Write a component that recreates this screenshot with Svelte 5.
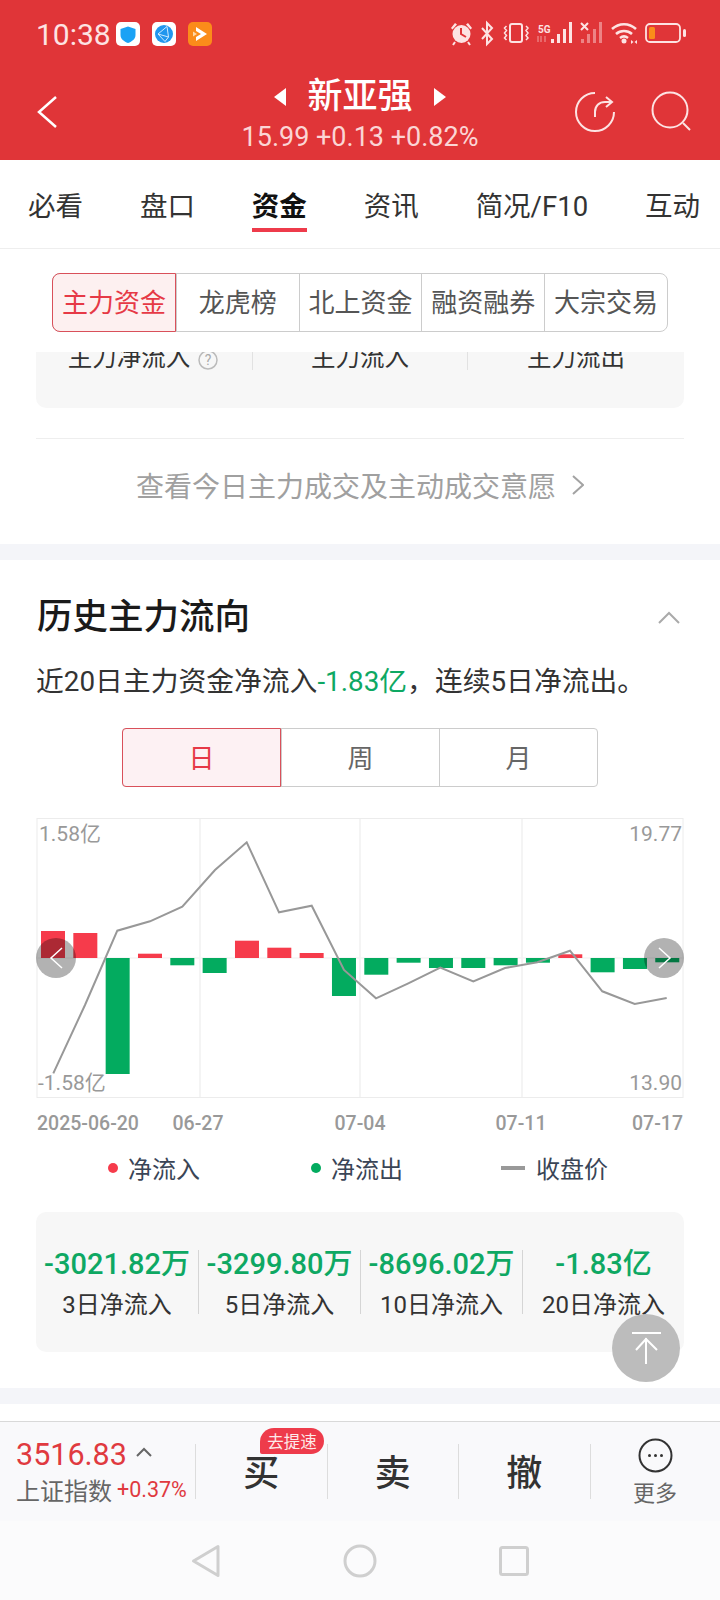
<script>
  const tabs = ['必看', '盘口', '资金', '资讯', '简况/F10', '互动'];
  const segments = ['主力资金', '龙虎榜', '北上资金', '融资融券', '大宗交易'];
  const periods = ['日', '周', '月'];
  const stats = [
    { value: '-3021.82万', label: '3日净流入' },
    { value: '-3299.80万', label: '5日净流入' },
    { value: '-8696.02万', label: '10日净流入' },
    { value: '-1.83亿', label: '20日净流入' }
  ];

  // net flow per day, px above (+) or below (-) the zero line
  const flows = [27, 25, -116, 4.3, -7.3, -15, 17.3, 10.3, 5, -38, -16.7, -4.7, -10, -10, -7.3, -4.7, 3.7, -14.3, -11, -4.3];
  const zero = 958;
  const bars = flows.map((v, i) => ({
    x: 41 + i * 32.33,
    y: v > 0 ? zero - v : zero,
    h: Math.abs(v),
    color: v > 0 ? '#f63b4b' : '#03ab5f'
  }));
  const price = '53.3,1073.3 85,1005 117.3,930.7 150,921.3 182.3,906.7 215,870 246.7,842.3 279,912.3 311.7,905.7 344,970 376,998.3 408.3,983.3 440.3,967.7 473.3,981.3 505,968 537.3,962.3 570,950.7 602.3,991.3 634.7,1004 666.7,998';
</script>

<div class="page">
  <header class="header">
    <div class="status">
      <div class="status-left">
        <span class="time">10:38</span>
        <svg class="app" viewBox="0 0 24 24"><rect width="24" height="24" rx="5" fill="#fff" /><path d="M12 4.500l7.500 2.500v6c0 4-3.500 6.500-7.500 8-4-1.500-7.500-4-7.500-8V7z" fill="#1aa2f5" /></svg>
        <svg class="app" viewBox="0 0 24 24"><rect width="24" height="24" rx="5" fill="#fff" /><circle cx="12" cy="12" r="9" fill="#2196ee" /><path d="M15 4.500L6 12l10.500 3L15 4.500zM6 12l7 7.500 3.500-4.500" fill="none" stroke="#cfeaff" stroke-width="1" /></svg>
        <svg class="app" viewBox="0 0 24 24"><rect width="24" height="24" rx="5" fill="#fb8c1a" /><path d="M8 5l11 7-11 7v-4l5-3-5-3z" fill="#fff" /><path d="M5 9.500l4 2.500-4 2.500z" fill="#ffd9a8" /></svg>
      </div>
      <svg class="status-right" width="240" height="30" viewBox="450 20 240 30">
        <g fill="#fde3e3" stroke="none">
          <circle cx="461.500" cy="35" r="9" />
          <path d="M451 29l4-5 2 1.500-4.500 5zM472 29l-4-5-2 1.500 4.500 5z" />
          <path d="M455 43l-2 3M468 43l2 3" stroke="#fde3e3" stroke-width="2" />
          <path d="M461 29v6l5 3" fill="none" stroke="#e03538" stroke-width="2" />
          <text class="tiny" x="538" y="33.500">5G</text>
          <rect x="551" y="40" width="3" height="4" />
          <rect x="557" y="35" width="3" height="9" />
          <rect x="563" y="30" width="3" height="14" />
          <rect x="569" y="23" width="3" height="21" />
          <g opacity="0.45">
            <rect x="581" y="40" width="3" height="4" />
            <rect x="587" y="35" width="3" height="9" />
            <rect x="593" y="30" width="3" height="14" />
            <rect x="599" y="23" width="3" height="21" />
          </g>
          <circle cx="624" cy="42" r="2.500" />
        </g>
        <g fill="none" stroke="#fde3e3" stroke-width="2">
          <path d="M482 29l10 11-5 5V24l5 5-10 11" />
          <rect x="510" y="25" width="12" height="18" rx="2" />
          <path d="M506.500 27l-2 2 2 2.500-2 2.500 2 2.500-2 2.500 2 2M526 27l2 2-2 2.500 2 2.500-2 2.500 2 2.500-2 2" stroke-width="1.500" />
          <path d="M538 37v6M541 37v6M545 37v6" stroke-width="1" opacity="0.6" />
          <path d="M581 24l7 7M588 24l-7 7" />
          <path d="M612 30c7-6.500 17-6.500 24 0M616 35c4.500-4 11.500-4 16 0M620 39c2.500-2 5.500-2 8 0" stroke-width="2.500" />
          <rect x="646" y="25" width="34" height="18" rx="4" stroke-width="1.800" />
        </g>
        <rect x="649" y="28" width="6" height="12" rx="1.500" fill="#fb8c1a" />
        <rect x="683" y="30" width="3" height="8" rx="1.500" fill="#fde3e3" />
        <path d="M631 41l2.500 2-2.500 2zM637 41l-2.500 2 2.500 2z" fill="#fde3e3" />
      </svg>
    </div>
    <div class="nav">
      <svg class="nav-side" width="80" height="92" viewBox="0 68 80 92">
        <path d="M56 97L39 112l17 15" fill="none" stroke="#fff" stroke-width="2.500" />
      </svg>
      <div class="title-block">
        <div class="title-row">
          <i class="tri left"></i>
          <span class="name">新亚强</span>
          <i class="tri right"></i>
        </div>
        <div class="quote">15.99 +0.13 +0.82%</div>
      </div>
      <svg class="nav-side end" width="160" height="92" viewBox="560 68 160 92">
        <g fill="none" stroke="#fde3e3" stroke-width="2">
          <path d="M595 93a19 19 0 1 0 19 19" />
          <path d="M595 117v-5c0-6 4-10 10-10h6M606 97l6 5-6 5" />
          <circle cx="670" cy="110" r="17.500" />
          <path d="M683 123l7 7" />
        </g>
      </svg>
    </div>
  </header>

  <nav class="tabs">
    {#each tabs as tab}
      <span class="tab" class:on={tab === '资金'}>{tab}</span>
    {/each}
  </nav>

  <section class="top">
    <div class="segs">
      {#each segments as seg, i}
        <span class="seg" class:active={i === 0}>{seg}</span>
      {/each}
    </div>
    <div class="flow-card">
      <div class="flow-row">
        <span class="flow-a"><b>主力净流入</b>
          <svg width="20" height="20" viewBox="0 0 20 20"><circle cx="10" cy="10" r="9" fill="none" stroke="#bbb" stroke-width="1.500" /><text class="qm" x="10" y="15">?</text></svg>
        </span>
        <span class="flow-b"><b>主力流入</b></span>
        <span class="flow-c"><b>主力流出</b></span>
      </div>
    </div>
    <div class="more">
      <span>查看今日主力成交及主动成交意愿</span>
      <svg width="12" height="20" viewBox="0 0 12 20"><path d="M1 1l10 9-10 9" fill="none" stroke="#a3a3a3" stroke-width="2" /></svg>
    </div>
  </section>

  <section class="history">
    <div class="head">
      <h2>历史主力流向</h2>
      <svg width="22" height="13" viewBox="0 0 22 13"><path d="M1 12L11 2l10 10" fill="none" stroke="#aaa" stroke-width="2" /></svg>
    </div>
    <p class="summary">近20日主力资金净流入<em>-1.83亿</em>，连续5日净流出。</p>
    <div class="periods">
      {#each periods as p, i}
        <span class="period" class:active={i === 0}>{p}</span>
      {/each}
    </div>

    <svg class="chart" width="650" height="320" viewBox="36 815 650 320">
      <rect x="37" y="818.500" width="646" height="279" fill="#fff" stroke="#ececec" stroke-width="1" />
      <path d="M200 819v278M360 819v278M522 819v278" stroke="#f1f1f1" stroke-width="1.500" />
      <path d="M37 958h646" stroke="#f5f5f5" stroke-width="1.500" />
      {#each bars as b}
        <rect x={b.x} y={b.y} width="24" height={b.h} fill={b.color} />
      {/each}
      <polyline points={price} fill="none" stroke="#989898" stroke-width="2" />
      <text class="ax" x="39" y="841">1.58亿</text>
      <text class="ax" x="38" y="1090">-1.58亿</text>
      <text class="ax" x="682" y="841" text-anchor="end">19.77</text>
      <text class="ax" x="682" y="1090" text-anchor="end">13.90</text>
      <text class="date" x="37" y="1130">2025-06-20</text>
      <text class="date" x="198" y="1130" text-anchor="middle">06-27</text>
      <text class="date" x="360" y="1130" text-anchor="middle">07-04</text>
      <text class="date" x="521" y="1130" text-anchor="middle">07-11</text>
      <text class="date" x="683" y="1130" text-anchor="end">07-17</text>
      <circle cx="56" cy="958" r="20" fill="#000" opacity="0.3" />
      <circle cx="664" cy="958" r="20" fill="#000" opacity="0.3" />
      <path d="M62 948l-11 10 11 10M659 948l11 10-11 10" fill="none" stroke="#fff" stroke-width="1.500" />
    </svg>

    <div class="legend">
      <span class="key in"><i></i>净流入</span>
      <span class="key out"><i></i>净流出</span>
      <span class="key close"><i></i>收盘价</span>
    </div>

    <div class="stats">
      {#each stats as s}
        <div class="stat">
          <div class="val">{s.value}</div>
          <div class="lbl">{s.label}</div>
        </div>
      {/each}
    </div>
  </section>

  <div class="blank"></div>

  <footer class="bar">
    <div class="index">
      <div class="idx-top"><span class="idx-num">3516.83</span>
        <svg width="16" height="10" viewBox="0 0 16 10"><path d="M1 9l7-7 7 7" fill="none" stroke="#666" stroke-width="2" /></svg>
      </div>
      <div class="idx-bot"><span class="idx-name">上证指数</span><span class="idx-pct">+0.37%</span></div>
    </div>
    <div class="act">买<span class="badge">去提速</span></div>
    <div class="act">卖</div>
    <div class="act">撤</div>
    <div class="act more-act">
      <svg width="35" height="35" viewBox="0 0 35 35"><circle cx="17.500" cy="17.500" r="16" fill="none" stroke="#333" stroke-width="2" /><circle cx="11.500" cy="17.500" r="1.500" fill="#333" /><circle cx="17.500" cy="17.500" r="1.500" fill="#333" /><circle cx="23.500" cy="17.500" r="1.500" fill="#333" /></svg>
      <span>更多</span>
    </div>
  </footer>

  <div class="sysnav">
    <svg width="30" height="34" viewBox="0 0 30 34"><path d="M27 2.500v29L2.500 17z" fill="none" stroke="#cfcfcf" stroke-width="3" stroke-linejoin="round" /></svg>
    <svg width="34" height="34" viewBox="0 0 34 34"><circle cx="17" cy="17" r="15" fill="none" stroke="#cfcfcf" stroke-width="3" /></svg>
    <svg width="30" height="30" viewBox="0 0 30 30"><rect x="1.500" y="1.500" width="27" height="27" rx="2" fill="none" stroke="#cfcfcf" stroke-width="3" /></svg>
  </div>

  <div class="to-top">
    <svg width="68" height="68" viewBox="0 0 68 68"><path d="M20 19h29M34 24v26M24 36l10-11 11 11" fill="none" stroke="#fff" stroke-width="2" /></svg>
  </div>
</div>

<style>
  :global(body) {
    margin: 0;
    background: #fff;
  }

  .page {
    position: relative;
    width: 720px;
    height: 1600px;
    overflow: hidden;
    background: #f4f5f9;
    color: #333;
    font-family: Roboto, "Noto Sans CJK SC", sans-serif;
  }

  /* header */
  .header {
    height: 160px;
    background: #e03538;
    color: #fff;
  }

  .status {
    height: 68px;
    display: flex;
    justify-content: space-between;
    align-items: center;
    padding: 0 30px 0 36px;
  }

  .status-left {
    display: flex;
    align-items: center;
    gap: 12px;
  }

  .time {
    width: 68px;
    font-size: 30px;
    color: #fde3e3;
    white-space: nowrap;
  }

  .app {
    width: 24px;
    height: 24px;
  }

  .status-right {
    display: block;
  }

  .tiny {
    font-size: 10px;
    font-weight: 700;
  }

  .nav {
    height: 92px;
    display: grid;
    grid-template-columns: 1fr auto 1fr;
  }

  .nav-side {
    display: block;
  }

  .nav-side.end {
    justify-self: end;
  }

  .title-block {
    padding-top: 9px;
    text-align: center;
  }

  .title-row {
    height: 40px;
    display: flex;
    justify-content: center;
    align-items: center;
    gap: 21px;
  }

  .name {
    font-size: 35px;
    line-height: 40px;
    font-weight: 500;
  }

  .tri {
    width: 0;
    height: 0;
    border-top: 9px solid transparent;
    border-bottom: 9px solid transparent;
  }

  .tri.left {
    border-right: 12px solid #fff;
  }

  .tri.right {
    border-left: 12px solid #fff;
  }

  .quote {
    margin-top: 5px;
    font-size: 27px;
    line-height: 30px;
    color: #fbd5d5;
    white-space: nowrap;
  }

  /* tabs */
  .tabs {
    height: 88px;
    display: flex;
    justify-content: space-between;
    align-items: flex-start;
    padding: 0 20px 0 28px;
    background: #fff;
    border-bottom: 1px solid #eee;
  }

  .tab {
    height: 68px;
    padding-top: 26px;
    box-sizing: border-box;
    font-size: 27.500px;
    line-height: 42px;
    color: #333;
    white-space: nowrap;
  }

  .tab.on {
    font-weight: 700;
    color: #111;
    border-bottom: 4px solid #ee3b4b;
    height: 72px;
  }

  /* sub sections */
  .top {
    height: 295px;
    background: #fff;
    padding: 24px 36px 0;
    box-sizing: border-box;
  }

  .segs {
    width: 616px;
    height: 59px;
    margin: 0 auto 20px;
    display: flex;
    box-sizing: border-box;
    border: 1px solid #ccc;
    border-radius: 8px;
  }

  .seg {
    flex: 1;
    display: flex;
    align-items: center;
    justify-content: center;
    padding-bottom: 5px;
    box-sizing: border-box;
    font-size: 26px;
    color: #555;
    border-left: 1px solid #ccc;
    white-space: nowrap;
  }

  .seg:first-child {
    border-left: 0;
  }

  .seg.active {
    margin: -1px 0 -1px -1px;
    color: #e63946;
    background: #fdf0f0;
    border: 1px solid #d9505a;
    border-radius: 8px 0 0 8px;
  }

  .flow-card {
    height: 56px;
    background: #f7f7f7;
    border-radius: 0 0 10px 10px;
    overflow: hidden;
  }

  .flow-row {
    height: 18px;
    display: grid;
    grid-template-columns: 216px 215px 1fr;
    font-size: 24.500px;
    color: #333;
  }

  .flow-row span {
    display: flex;
    align-items: flex-start;
    justify-content: center;
    height: 18px;
    overflow: hidden;
    border-left: 1px solid #e2e2e2;
  }

  /* top of the labels scrolled under the sub tabs */
  .flow-row b {
    margin-top: -12px;
    font-weight: 400;
    line-height: 36px;
    white-space: nowrap;
  }

  .flow-row span > :global(svg) {
    flex: none;
  }

  .flow-a {
    border-left: 0 !important;
    gap: 8px;
    padding-right: 2px;
  }

  .flow-row svg {
    margin-top: -2px;
  }

  .qm {
    font-size: 14px;
    fill: #aaa;
    text-anchor: middle;
  }

  .more {
    margin-top: 30px;
    height: 92px;
    padding-bottom: 15px;
    box-sizing: content-box;
    border-top: 1px solid #eee;
    display: flex;
    align-items: center;
    justify-content: center;
    gap: 16px;
    font-size: 28px;
    color: #a0a0a0;
    white-space: nowrap;
  }

  /* history */
  .history {
    margin-top: 16px;
    height: 828px;
    box-sizing: border-box;
    padding: 39px 36px 0;
    background: #fff;
  }

  .head {
    display: flex;
    justify-content: space-between;
    align-items: center;
    padding: 0 4px 0 1px;
  }

  h2 {
    margin: 0;
    font-size: 35.500px;
    line-height: 36px;
    font-weight: 500;
    color: #1a1a1a;
  }

  .summary {
    margin: 29px 0 0;
    font-size: 27.800px;
    line-height: 36px;
    color: #333;
    white-space: nowrap;
  }

  .summary em {
    font-style: normal;
    color: #0ea863;
  }

  .periods {
    width: 476px;
    height: 59px;
    margin: 28px 0 0 86px;
    display: flex;
    box-sizing: border-box;
    border: 1px solid #ccc;
    border-radius: 4px;
  }

  .period {
    flex: 1;
    display: flex;
    align-items: center;
    justify-content: center;
    padding-bottom: 3px;
    box-sizing: border-box;
    font-size: 26px;
    color: #666;
    border-left: 1px solid #ccc;
  }

  .period:first-child {
    border-left: 0;
  }

  .period.active {
    margin: -1px 0 -1px -1px;
    color: #e63946;
    background: #fdf1f3;
    border: 1px solid #d9505a;
    border-radius: 4px 0 0 4px;
  }

  .chart {
    display: block;
    margin-top: 28px;
  }

  .ax {
    font-size: 21px;
    fill: #999;
  }

  .date {
    font-size: 19.500px;
    font-weight: 500;
    fill: #999;
  }

  .legend {
    height: 34px;
    margin-top: 15px;
    display: grid;
    grid-template-columns: 203px 190px 1fr;
    padding-left: 72px;
  }

  .key {
    display: flex;
    align-items: center;
    font-size: 24px;
    color: #3a4556;
    white-space: nowrap;
  }

  .key i {
    width: 10px;
    height: 10px;
    margin-right: 10px;
    border-radius: 50%;
  }

  .key.in i {
    background: #f63b4b;
  }

  .key.out i {
    background: #03ab5f;
  }

  .key.close i {
    width: 24px;
    height: 4px;
    margin-right: 11px;
    border-radius: 0;
    background: #999;
  }

  .stats {
    height: 140px;
    margin-top: 28px;
    box-sizing: border-box;
    padding-top: 38px;
    display: grid;
    grid-template-columns: repeat(4, 1fr);
    align-items: start;
    background: #f7f7f7;
    border-radius: 10px;
  }

  .stat {
    height: 64px;
    text-align: center;
    border-left: 1px solid #d5d5d5;
    white-space: nowrap;
  }

  .stat:first-child {
    border-left: 0;
  }

  .val {
    font-size: 29px;
    line-height: 28px;
    font-weight: 500;
    color: #0ea863;
  }

  .lbl {
    margin-top: 13px;
    font-size: 24px;
    line-height: 28px;
    color: #333;
  }

  .blank {
    height: 17px;
    margin-top: 16px;
    background: #fff;
  }

  /* bottom bar */
  .bar {
    height: 100px;
    box-sizing: border-box;
    display: flex;
    align-items: flex-start;
    padding-top: 22px;
    background: #f9f9fb;
    border-top: 1px solid #d9d9d9;
  }

  .index {
    width: 195px;
    flex: none;
    box-sizing: border-box;
    padding-left: 16px;
    white-space: nowrap;
  }

  .idx-top {
    height: 20px;
    display: flex;
    align-items: center;
    gap: 9px;
  }

  .idx-num {
    font-size: 30.500px;
    color: #e03a3f;
  }

  .idx-top svg {
    margin-top: -4px;
  }

  .idx-bot {
    margin-top: 11px;
    height: 28px;
    display: flex;
    align-items: center;
    gap: 5px;
  }

  .idx-name {
    font-size: 24px;
    color: #666;
  }

  .idx-pct {
    font-size: 21.500px;
    color: #e03a3f;
  }

  .act {
    position: relative;
    width: 131.500px;
    height: 55px;
    flex: none;
    box-sizing: border-box;
    padding-bottom: 4px;
    display: flex;
    align-items: center;
    justify-content: center;
    font-size: 36px;
    font-weight: 500;
    color: #333;
    border-left: 1px solid #ddd;
  }

  .badge {
    position: absolute;
    left: 64px;
    top: -16px;
    width: 64px;
    height: 26px;
    display: flex;
    align-items: center;
    justify-content: center;
    border-radius: 14px 13px 13px 2px;
    background: #ee3b4b;
    font-size: 16.500px;
    font-weight: 400;
    color: #fdeaea;
    white-space: nowrap;
  }

  .more-act {
    flex-direction: column;
    justify-content: flex-start;
    width: 130px;
    padding-bottom: 0;
    font-size: 22px;
    font-weight: 400;
    color: #666;
  }

  .more-act svg {
    flex: none;
    margin-top: -6px;
  }

  .more-act span {
    margin-top: 7px;
    line-height: 28px;
  }

  .sysnav {
    height: 79px;
    display: flex;
    align-items: center;
    background: #fbfbfc;
    padding-left: 191px;
    gap: 122px;
  }

  .to-top {
    position: absolute;
    left: 612px;
    top: 1314px;
    width: 68px;
    height: 68px;
    border-radius: 50%;
    background: #bcbcbc;
  }

  .to-top svg {
    display: block;
  }
</style>
